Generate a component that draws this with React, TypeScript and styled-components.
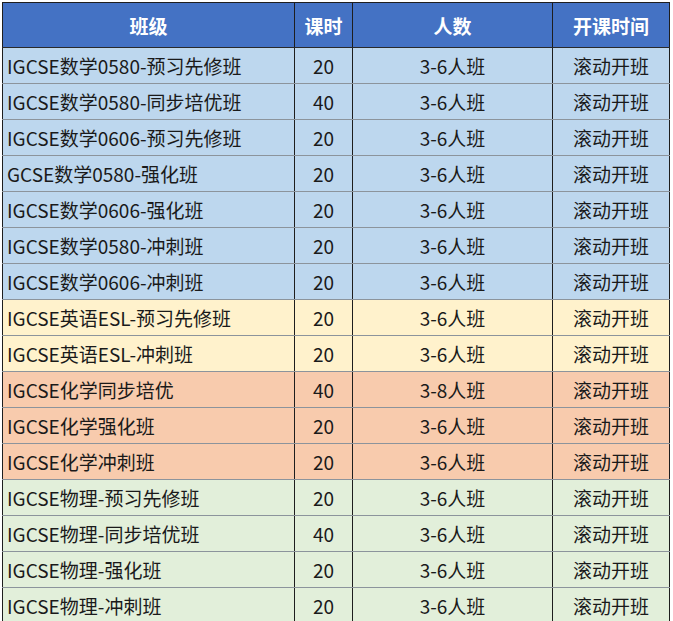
import React from 'react'
import styled, { createGlobalStyle } from 'styled-components'

const GlobalStyle = createGlobalStyle`
  html, body {
    margin: 0;
    padding: 0;
    background: #ffffff;
  }
  body {
    font-family: "Noto Sans CJK SC", "Noto Sans", sans-serif;
  }
`

const Wrapper = styled.div`
  padding: 2px 0 0 2px;
`

const Table = styled.table`
  border-collapse: collapse;
  table-layout: fixed;
  width: 667px;
  border: 1px solid #1e1e1e;
  font-size: 19px;
  color: #1a1a1a;
`

const HeadCell = styled.th`
  height: 44px;
  padding: 0;
  background: #4472c4;
  color: #ffffff;
  font-weight: 700;
  font-size: 19px;
  text-align: center;
  border: 1px solid #1e1e1e;
  border-bottom: 1px solid #2a2a2a;
`

type Tone = 'blue' | 'yellow' | 'orange' | 'green'

const tones: Record<Tone, string> = {
  blue: '#bdd7ee',
  yellow: '#fff2cc',
  orange: '#f8cbad',
  green: '#e2efda',
}

const Row = styled.tr<{ $tone: Tone }>`
  background: ${p => tones[p.$tone]};
`

const Cell = styled.td<{ $left?: boolean }>`
  height: 35px;
  padding: 0 0 0 ${p => (p.$left ? '4px' : '0')};
  text-align: ${p => (p.$left ? 'left' : 'center')};
  white-space: nowrap;
  overflow: hidden;
  border-top: 1px solid #8c949c;
  border-bottom: 1px solid #8c949c;
  border-left: 1px solid #1e1e1e;
  border-right: 1px solid #1e1e1e;
  line-height: 35px;
`

interface Course {
  name: string
  hours: number
  size: string
  tone: Tone
}

const courses: Course[] = [
  { name: 'IGCSE数学0580-预习先修班', hours: 20, size: '3-6人班', tone: 'blue' },
  { name: 'IGCSE数学0580-同步培优班', hours: 40, size: '3-6人班', tone: 'blue' },
  { name: 'IGCSE数学0606-预习先修班', hours: 20, size: '3-6人班', tone: 'blue' },
  { name: 'GCSE数学0580-强化班', hours: 20, size: '3-6人班', tone: 'blue' },
  { name: 'IGCSE数学0606-强化班', hours: 20, size: '3-6人班', tone: 'blue' },
  { name: 'IGCSE数学0580-冲刺班', hours: 20, size: '3-6人班', tone: 'blue' },
  { name: 'IGCSE数学0606-冲刺班', hours: 20, size: '3-6人班', tone: 'blue' },
  { name: 'IGCSE英语ESL-预习先修班', hours: 20, size: '3-6人班', tone: 'yellow' },
  { name: 'IGCSE英语ESL-冲刺班', hours: 20, size: '3-6人班', tone: 'yellow' },
  { name: 'IGCSE化学同步培优', hours: 40, size: '3-8人班', tone: 'orange' },
  { name: 'IGCSE化学强化班', hours: 20, size: '3-6人班', tone: 'orange' },
  { name: 'IGCSE化学冲刺班', hours: 20, size: '3-6人班', tone: 'orange' },
  { name: 'IGCSE物理-预习先修班', hours: 20, size: '3-6人班', tone: 'green' },
  { name: 'IGCSE物理-同步培优班', hours: 40, size: '3-6人班', tone: 'green' },
  { name: 'IGCSE物理-强化班', hours: 20, size: '3-6人班', tone: 'green' },
  { name: 'IGCSE物理-冲刺班', hours: 20, size: '3-6人班', tone: 'green' },
]

export default function App() {
  return (
    <Wrapper>
      <GlobalStyle />
      <Table>
        <colgroup>
          <col style={{ width: 292 }} />
          <col style={{ width: 58 }} />
          <col style={{ width: 200 }} />
          <col style={{ width: 117 }} />
        </colgroup>
        <thead>
          <tr>
            <HeadCell>班级</HeadCell>
            <HeadCell>课时</HeadCell>
            <HeadCell>人数</HeadCell>
            <HeadCell>开课时间</HeadCell>
          </tr>
        </thead>
        <tbody>
          {courses.map(c => (
            <Row key={c.name} $tone={c.tone}>
              <Cell $left>{c.name}</Cell>
              <Cell>{c.hours}</Cell>
              <Cell>{c.size}</Cell>
              <Cell>滚动开班</Cell>
            </Row>
          ))}
        </tbody>
      </Table>
    </Wrapper>
  )
}
